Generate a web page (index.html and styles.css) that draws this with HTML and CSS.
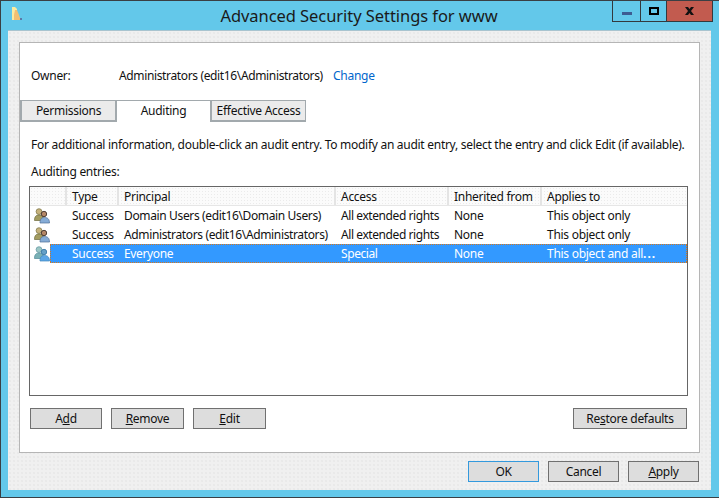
FILE: index.html
```html
<!DOCTYPE html>
<html lang="en">
<head>
<meta charset="utf-8">
<title>Advanced Security Settings for www</title>
<link rel="stylesheet" href="styles.css">
</head>
<body>
<svg class="defs" width="0" height="0" aria-hidden="true">
  <defs>
    <symbol id="users" viewBox="0 0 16 16">
      <circle cx="5" cy="3.600" r="2.900" fill="#c6b27c" stroke="#77703f" stroke-width=".7"/>
      <path d="M.5 12.500c0-4 1.500-5.500 4.500-5.500s4.500 1.500 4.500 5.500z" fill="#a39c60" stroke="#6d6a3c" stroke-width=".7"/>
      <circle cx="10" cy="6" r="2.700" fill="#b58767" stroke="#43342c" stroke-width=".9"/>
      <path d="M6 15c0-4 1.500-5.500 4.500-5.500s5 1.500 5 5.500z" fill="#86acd6" stroke="#4d6f96" stroke-width=".7"/>
    </symbol>
    <symbol id="users-sel" viewBox="0 0 16 16">
      <circle cx="5" cy="3.600" r="2.900" fill="#9cc6c4" stroke="#5b93a0" stroke-width=".7"/>
      <path d="M.5 12.500c0-4 1.500-5.500 4.500-5.500s4.500 1.500 4.500 5.500z" fill="#79b0b4" stroke="#4f8a98" stroke-width=".7"/>
      <circle cx="10" cy="6" r="2.700" fill="#64a0c8" stroke="#3b7aa6" stroke-width=".9"/>
      <path d="M6 15c0-4 1.500-5.500 4.500-5.500s5 1.500 5 5.500z" fill="#5ba6e6" stroke="#3f86bd" stroke-width=".7"/>
    </symbol>
  </defs>
</svg>
<div class="window">
  <header class="titlebar">
    <svg class="app-icon" width="16" height="16" viewBox="0 0 16 16" aria-hidden="true">
      <path d="M3 1h3l2 2v6l1 2v3H3z" fill="#fbeaa0"/>
      <path d="M6 4h2l2 5 1 3v2H5V9z" fill="#f2bf72"/>
      <path d="M11 12h2v2h-2z" fill="#5b78a8"/>
    </svg>
    <h1 class="title">Advanced Security Settings for www</h1>
    <div class="controls">
      <div class="ctl ctl-min"><span class="min-glyph"></span></div>
      <div class="ctl ctl-max"><span class="max-glyph"></span></div>
      <div class="ctl ctl-close">
        <svg width="9" height="8" viewBox="0 0 9 8" aria-hidden="true"><path d="M0 0h3l1.500 2L6 0h3L6 4l3 4H6L4.500 6 3 8H0l3-4z" fill="#111"/></svg>
      </div>
    </div>
  </header>
  <main class="client">
    <section class="panel">
      <div class="owner">
        <span class="owner-label">Owner:</span>
        <span class="owner-name">Administrators (edit16\Administrators)</span>
        <a class="change" href="#">Change</a>
      </div>
      <nav class="tabs">
        <div class="tab">Permissions</div>
        <div class="tab tab-active">Auditing</div>
        <div class="tab tab-last">Effective Access</div>
      </nav>
      <div class="tab-body">
        <p class="info">For additional information, double-click an audit entry. To modify an audit entry, select the entry and click Edit (if available).</p>
        <p class="entries-label">Auditing entries:</p>
        <div class="list">
          <div class="list-head">
            <div class="hcell hcell-icon"></div>
            <div class="hcell hcell-type">Type</div>
            <div class="hcell hcell-principal">Principal</div>
            <div class="hcell hcell-access">Access</div>
            <div class="hcell hcell-inherited">Inherited from</div>
            <div class="hcell hcell-applies">Applies to</div>
          </div>
          <div class="row">
            <div class="row-icon"><svg width="16" height="16"><use href="#users"/></svg></div>
            <div class="row-body">
              <span class="c-type">Success</span><span class="c-principal">Domain Users (edit16\Domain Users)</span><span class="c-access">All extended rights</span><span class="c-inherited">None</span><span class="c-applies">This object only</span>
            </div>
          </div>
          <div class="row">
            <div class="row-icon"><svg width="16" height="16"><use href="#users"/></svg></div>
            <div class="row-body">
              <span class="c-type">Success</span><span class="c-principal">Administrators (edit16\Administrators)</span><span class="c-access">All extended rights</span><span class="c-inherited">None</span><span class="c-applies">This object only</span>
            </div>
          </div>
          <div class="row row-selected">
            <div class="row-icon"><svg width="16" height="16"><use href="#users-sel"/></svg></div>
            <div class="row-body">
              <span class="c-type">Success</span><span class="c-principal">Everyone</span><span class="c-access">Special</span><span class="c-inherited">None</span><span class="c-applies">This object and all<i class="dots">...</i></span>
            </div>
          </div>
        </div>
        <div class="list-actions">
          <button class="btn btn-small btn-add" type="button">A<u>d</u>d</button>
          <button class="btn btn-small" type="button"><u>R</u>emove</button>
          <button class="btn btn-small" type="button"><u>E</u>dit</button>
          <button class="btn btn-restore" type="button">Re<u>s</u>tore defaults</button>
        </div>
      </div>
    </section>
    <footer class="dialog-actions">
      <button class="btn btn-dialog btn-default" type="button">OK</button>
      <button class="btn btn-dialog" type="button">Cancel</button>
      <button class="btn btn-dialog" type="button"><u>A</u>pply</button>
    </footer>
  </main>
</div>
</body>
</html>
```

FILE: styles.css
```css
* { box-sizing: border-box; }
html, body { margin: 0; padding: 0; }
body {
  width: 719px;
  height: 498px;
  overflow: hidden;
  font-family: "Noto Sans", "Open Sans", sans-serif;
  font-size: 12px;
  letter-spacing: -.28px;
  color: #111;
}
.defs { display: block; height: 0; }
.window {
  width: 719px;
  height: 498px;
  background: #63c8ea;
  border: 1px solid #3a3f44;
  border-right: 0;
  display: flex;
  flex-direction: column;
}
.titlebar {
  height: 29px;
  flex: none;
  display: flex;
  align-items: flex-start;
  position: relative;
}
.app-icon { margin: 5px 0 0 8px; flex: none; }
.title {
  margin: 0;
  flex: 1;
  text-align: center;
  font-weight: 400;
  font-size: 16.500px;
  line-height: 30px;
  letter-spacing: -.06px;
  color: #1a1a1a;
  padding-right: 26px;
}
.controls {
  position: absolute;
  top: 0;
  right: 6px;
  height: 21px;
  display: flex;
  border: 1px solid #33393e;
  border-top: 0;
}
.ctl { height: 20px; display: flex; align-items: center; justify-content: center; }
.ctl-min { width: 28px; border-right: 1px solid #33393e; }
.ctl-max { width: 25px; }
.ctl-close { width: 46px; background: #c25b4f; border-left: 1px solid #33393e; }
.min-glyph { width: 10px; height: 3px; margin-top: 5px; background: #3d5c92; }
.max-glyph { width: 10px; height: 8px; border: 2px solid #000; }
.client {
  flex: 1;
  margin: 0 8px 7px 7px;
  background-color: #f0f0f0;
  background-image: radial-gradient(circle, #e9e9e9 .7px, transparent .8px);
  background-size: 4px 4px;
  padding: 11px 11px 0 11px;
  border-top: 1px solid #a9c4cf;
  display: flex;
  flex-direction: column;
}
.panel {
  height: 411px;
  flex: none;
  background: #fff;
  border: 1px solid #b5b5b5;
  display: flex;
  flex-direction: column;
}
.owner {
  display: flex;
  height: 57px;
  padding: 24px 0 0 11px;
  line-height: 18px;
  white-space: nowrap;
}
.owner-label { width: 88px; }
.owner-name { width: 214px; letter-spacing: -.36px; }
.change { color: #0066cc; text-decoration: none; }
.tabs { display: flex; height: 22px; flex: none; }
.tab {
  width: 95px;
  background: #ebebeb;
  border: 1px solid #a2a9ad;
  border-width: 1px 0 2px 2px;
  text-align: center;
  line-height: 20px;
}
.tab-active { background: #fff; border-width: 1px 0 0 2px; }
.tab-last { width: 96px; border-right-width: 1px; }
.tab-body { padding: 14px 11px 0 9px; flex: 1; }
.info { margin: 0; line-height: 18px; height: 18px; padding-left: 2px; white-space: nowrap; }
.entries-label { margin: 9px 0 0 0; line-height: 18px; height: 18px; padding-left: 2px; }
.list {
  margin-top: 5px;
  height: 210px;
  border: 1px solid #666;
  background: #fff;
}
.list-head {
  height: 19px;
  display: flex;
  background-color: #fbfbfb;
  background-image: radial-gradient(circle, #ebebeb .7px, transparent .8px);
  background-size: 3px 3px;
  border-bottom: 1px solid #e6e6e6;
}
.hcell {
  border-right: 2px solid #e4e4e4;
  padding-left: 5px;
  line-height: 20px;
  white-space: nowrap;
  overflow: hidden;
}
.hcell-icon { width: 37px; }
.hcell-type { width: 52px; }
.hcell-principal { width: 217px; }
.hcell-access { width: 113px; }
.hcell-inherited { width: 93px; }
.hcell-applies { flex: 1; border-right: 0; }
.row { height: 19px; display: flex; line-height: 20px; }
.row-icon { width: 20px; flex: none; padding: 2px 0 0 4px; }
.row-icon svg { display: block; }
.row-body { flex: 1; display: flex; white-space: nowrap; }
.row-body > span { display: block; padding-left: 5px; overflow: hidden; }
.row-body > .c-type { width: 69px; padding-left: 22px; }
.c-principal { width: 217px; letter-spacing: -.36px; }
.c-access { width: 113px; letter-spacing: -.42px; }
.c-inherited { width: 93px; }
.c-applies { flex: 1; }
.dots { font-style: normal; letter-spacing: 1px; font-weight: 700; }
.row-selected .row-body {
  color: #fff;
  background-color: #3399ff;
  background-image:
    linear-gradient(90deg, #d9771a 50%, transparent 50%),
    linear-gradient(90deg, #d9771a 50%, transparent 50%),
    linear-gradient(0deg, #d9771a 50%, transparent 50%),
    linear-gradient(0deg, #d9771a 50%, transparent 50%);
  background-size: 2px 1px, 2px 1px, 1px 2px, 1px 2px;
  background-position: 0 0, 0 100%, 0 0, 100% 0;
  background-repeat: repeat-x, repeat-x, repeat-y, repeat-y;
}
.list-actions { display: flex; margin-top: 12px; padding: 0 1px; gap: 9px; }
.btn {
  height: 21px;
  padding: 0;
  background: #dddddd;
  border: 1px solid #707070;
  font: inherit;
  letter-spacing: inherit;
  line-height: 17px;
  color: #111;
}
.btn-small { width: 73px; }
.btn-add { width: 72px; }
.btn-restore { width: 114px; margin-left: auto; }
.dialog-actions { display: flex; justify-content: flex-end; gap: 9px; margin-top: 8px; padding-right: 1px; }
.btn-dialog { width: 71px; }
.btn-default { border-color: #3399dd; }
```
